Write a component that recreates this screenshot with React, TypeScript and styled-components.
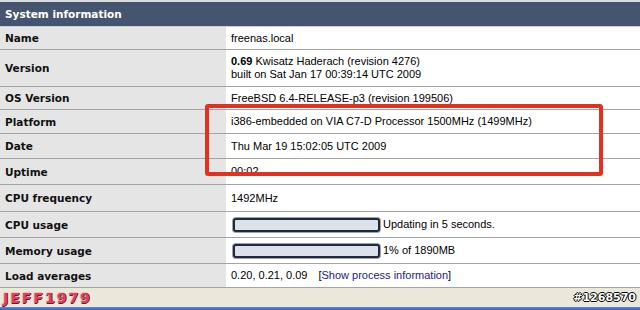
import React from "react";
import styled, { createGlobalStyle } from "styled-components";

const Global = createGlobalStyle`
  html, body { margin: 0; padding: 0; background: #ffffff; }
  body { width: 640px; height: 310px; overflow: hidden; }
`;

const Page = styled.div`
  position: relative;
  width: 640px;
  height: 310px;
  display: flex;
  flex-direction: column;
  background: #ffffff;
  font-family: "Liberation Sans", Arial, sans-serif;
  font-size: 11px;
  color: #000;
`;

const TopStrip = styled.div`
  height: 2px;
  background: #d8dbe0;
`;

const Header = styled.div`
  height: 24px;
  background: #46556f;
  border-bottom: 1px solid #c9ced6;
  display: flex;
  align-items: center;
  padding-left: 5px;
  color: #ffffff;
  font-family: "DejaVu Sans", Verdana, sans-serif;
  font-weight: bold;
  font-size: 10.5px;
`;

const Table = styled.div`
  display: flex;
  flex-direction: column;
`;

const Row = styled.div<{ $h: number }>`
  display: flex;
  height: ${(p) => p.$h}px;
  box-sizing: border-box;
  border-bottom: 1px solid #a4a4a4;
`;

const Label = styled.div`
  width: 226px;
  flex: none;
  background: #e5e5e5;
  padding-left: 5px;
  box-sizing: border-box;
  display: flex;
  align-items: center;
  font-family: "DejaVu Sans", Verdana, sans-serif;
  font-weight: bold;
  font-size: 10.5px;
  color: #111;
`;

const Value = styled.div`
  flex: 1;
  padding-left: 5px;
  display: flex;
  flex-direction: column;
  justify-content: center;
  line-height: 13px;
`;

const Inline = styled.div`
  display: flex;
  align-items: center;
  gap: 3px;
`;

const Bold = styled.b`
  font-weight: bold;
`;

const Bar = styled.div`
  width: 143px;
  height: 10px;
  border: 2px solid #1f2a3c;
  border-radius: 3px;
  background: #dde2ea;
  box-shadow: 0 0 0 1px #9ea3aa;
  margin-left: 2px;
`;

const Link = styled.a`
  color: #23238c;
  text-decoration: none;
`;

const Gap = styled.span`
  display: inline-block;
  width: 11px;
`;

const Footer = styled.div`
  flex: 1;
  display: flex;
  flex-direction: column;
`;

const FooterBar = styled.div`
  height: 19px;
  background: #ebe8d9;
  display: flex;
  align-items: center;
  justify-content: space-between;
  padding: 0 4px 0 3px;
`;

const FooterBlue = styled.div`
  flex: 1;
  background: linear-gradient(#5a8be0, #2f63c6);
`;

const Watermark = styled.span`
  font-family: "DejaVu Sans", Verdana, sans-serif;
  font-weight: 900;
  font-size: 14px;
  letter-spacing: 2px;
  color: #d8445a;
  text-shadow: 1px 0 0 #7a1020, -1px 0 0 #f4c0c8, 0 1px 0 #7a1020, 0 -1px 0 #f4c0c8;
`;

const Tag = styled.span`
  font-family: "DejaVu Sans", Verdana, sans-serif;
  font-weight: bold;
  font-size: 11px;
  color: #ffffff;
  text-shadow: 1px 0 0 #000, -1px 0 0 #000, 0 1px 0 #000, 0 -1px 0 #000;
`;

const Highlight = styled.div`
  position: absolute;
  left: 205px;
  top: 104px;
  width: 398px;
  height: 72px;
  box-sizing: border-box;
  border: 4px solid #e2321f;
  border-radius: 3px;
  pointer-events: none;
`;

export default function App() {
  return (
    <Page>
      <Global />
      <TopStrip />
      <Header>System information</Header>
      <Table>
        <Row $h={23}>
          <Label>Name</Label>
          <Value>freenas.local</Value>
        </Row>
        <Row $h={37}>
          <Label>Version</Label>
          <Value>
            <div>
              <Bold>0.69</Bold> Kwisatz Haderach (revision 4276)
            </div>
            <div>built on Sat Jan 17 00:39:14 UTC 2009</div>
          </Value>
        </Row>
        <Row $h={23}>
          <Label>OS Version</Label>
          <Value>FreeBSD 6.4-RELEASE-p3 (revision 199506)</Value>
        </Row>
        <Row $h={24}>
          <Label>Platform</Label>
          <Value>i386-embedded on VIA C7-D Processor 1500MHz (1499MHz)</Value>
        </Row>
        <Row $h={25}>
          <Label>Date</Label>
          <Value>Thu Mar 19 15:02:05 UTC 2009</Value>
        </Row>
        <Row $h={26}>
          <Label>Uptime</Label>
          <Value>00:02</Value>
        </Row>
        <Row $h={27}>
          <Label>CPU frequency</Label>
          <Value>1492MHz</Value>
        </Row>
        <Row $h={26}>
          <Label>CPU usage</Label>
          <Value>
            <Inline>
              <Bar />
              <span>Updating in 5 seconds.</span>
            </Inline>
          </Value>
        </Row>
        <Row $h={26}>
          <Label>Memory usage</Label>
          <Value>
            <Inline>
              <Bar />
              <span>1% of 1890MB</span>
            </Inline>
          </Value>
        </Row>
        <Row $h={24}>
          <Label>Load averages</Label>
          <Value>
            <div>
              0.20, 0.21, 0.09
              <Gap />[<Link href="#">Show process information</Link>]
            </div>
          </Value>
        </Row>
      </Table>
      <Footer>
        <FooterBar>
          <Watermark>JEFF1979</Watermark>
          <Tag>#1268570</Tag>
        </FooterBar>
        <FooterBlue />
      </Footer>
      <Highlight />
    </Page>
  );
}
